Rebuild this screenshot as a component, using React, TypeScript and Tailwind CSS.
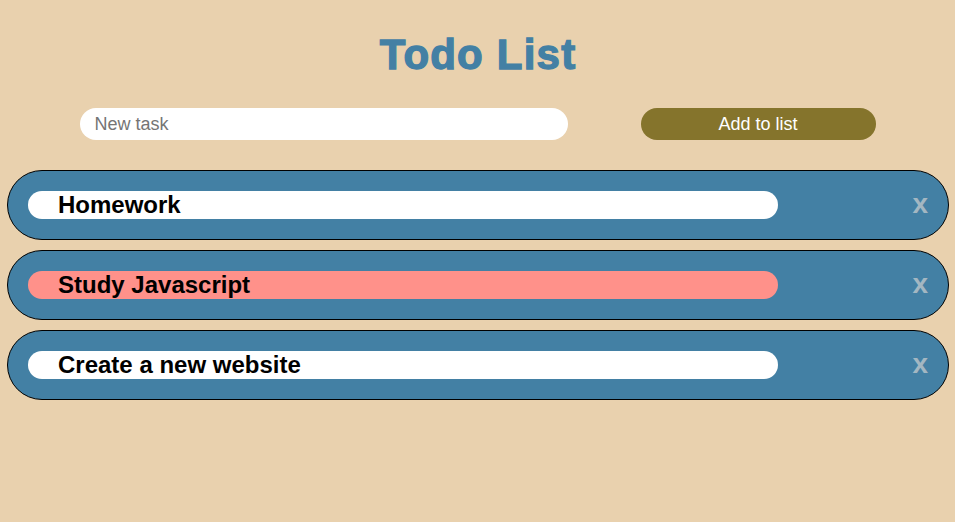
import React, { useState } from "react";

interface Task {
  id: number;
  text: string;
  done: boolean;
}

const App: React.FC = () => {
  const [tasks, setTasks] = useState<Task[]>([
    { id: 1, text: "Homework", done: false },
    { id: 2, text: "Study Javascript", done: true },
    { id: 3, text: "Create a new website", done: false },
  ]);
  const [draft, setDraft] = useState("");

  const addTask = () => {
    if (!draft.trim()) return;
    setTasks([...tasks, { id: Date.now(), text: draft.trim(), done: false }]);
    setDraft("");
  };

  return (
    <div
      className="min-h-screen bg-[#e9d1ae] pt-[30px] pl-[7px] pr-[6px]"
      style={{ fontFamily: '"Liberation Sans", Arial, sans-serif' }}
    >
      <h1 className="text-center text-[42px] leading-[50px] font-bold tracking-[1.2px] text-[#4380a4] [-webkit-text-stroke:1.3px_#4380a4]">
        Todo List
      </h1>

      <div className="mt-[28px] flex justify-center gap-[73px] pr-[1px]">
        <input
          value={draft}
          onChange={(e) => setDraft(e.target.value)}
          placeholder="New task"
          className="w-[488px] h-[32px] rounded-full bg-white px-[15px] text-[18px] text-black placeholder:text-[#757575] outline-none"
        />
        <button
          onClick={addTask}
          className="w-[235px] h-[32px] rounded-full bg-[#85742c] text-white text-[18px]"
        >
          Add to list
        </button>
      </div>

      <div className="mt-[30px] flex flex-col gap-[10px]">
        {tasks.map((task) => (
          <div
            key={task.id}
            className="h-[70px] rounded-full border border-black bg-[#4380a4] flex items-center pl-[20px] pr-[20px]"
          >
            <div
              onClick={() =>
                setTasks(tasks.map((t) => (t.id === task.id ? { ...t, done: !t.done } : t)))
              }
              className={`w-[750px] h-[28px] rounded-full flex items-center pl-[30px] text-[24px] font-bold text-black cursor-pointer ${
                task.done ? "bg-[#ff918a]" : "bg-white"
              }`}
            >
              {task.text}
            </div>
            <button
              onClick={() => setTasks(tasks.filter((t) => t.id !== task.id))}
              className="ml-auto text-[28px] leading-none font-bold text-[#a3b7c2] pb-[2px]"
            >
              x
            </button>
          </div>
        ))}
      </div>
    </div>
  );
};

export default App;
